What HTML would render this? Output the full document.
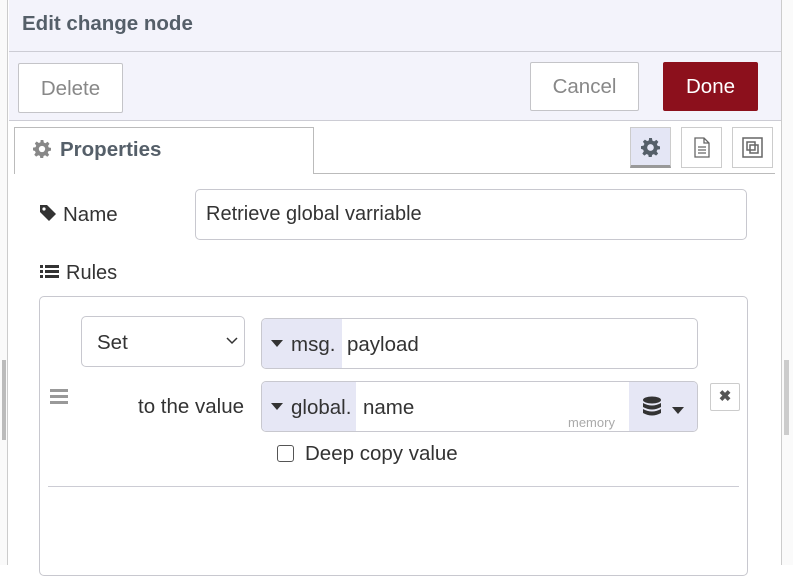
<!DOCTYPE html>
<html><head><style>
*{box-sizing:border-box;margin:0;padding:0}
body{width:793px;height:565px;overflow:hidden;background:#fff;font-family:"Liberation Sans",sans-serif;position:relative;color:#444}
.a{position:absolute}
.btn{position:absolute;border:1px solid #c4c4c8;background:#fff;color:#888;font-size:20.5px;display:flex;align-items:center;justify-content:center;border-radius:2px}
.inp{position:absolute;border:1px solid #c8c8cf;border-radius:5px;background:#fff;overflow:hidden}
.tri{display:inline-block;width:0;height:0;border-left:6px solid transparent;border-right:6px solid transparent;border-top:7px solid #333;vertical-align:middle;margin-right:8px;position:relative;top:-2px}
</style></head><body>
<div class="a" style="left:0;top:0;width:8px;height:565px;background:#fafafa;border-right:1px solid #ccc"></div>
<div class="a" style="left:2px;top:360px;width:4px;height:80px;background:#bbb"></div>
<div class="a" style="left:781px;top:0;width:12px;height:565px;background:#fafafa;border-left:1px solid #ccc"></div>
<div class="a" style="left:784px;top:360px;width:5px;height:75px;background:#ccc"></div>
<div class="a" style="left:9px;top:0;width:772px;height:120px;background:#f3f3fb"></div>
<div class="a" style="left:22px;top:12px;font-size:20.5px;font-weight:bold;color:#555f69">Edit change node</div>
<div class="a" style="left:9px;top:51px;width:772px;height:1px;background:#ccccd4"></div>
<div class="a" style="left:9px;top:120px;width:772px;height:1px;background:#ccccd4"></div>
<div class="btn" style="left:18px;top:63px;width:105px;height:50px;padding-top:2px">Delete</div>
<div class="btn" style="left:530px;top:62px;width:109px;height:49px">Cancel</div>
<div class="btn" style="left:663px;top:62px;width:95px;height:49px;background:#8c101c;color:#fff;border-color:#8c101c">Done</div>
<div class="a" style="left:14px;top:127px;width:300px;height:47px;border:1px solid #bbb;border-bottom:none;background:#fff"></div>
<div class="a" style="left:313px;top:173px;width:462px;height:1px;background:#bbb"></div>
<svg class="a" style="left:33px;top:140px" width="18" height="18" viewBox="0 0 20 20"><path fill="#888" d="M10 6.5a3.5 3.5 0 1 0 0 7 3.5 3.5 0 0 0 0-7zM8.5 0h3l.5 2.8 1.8.8 2.4-1.6 2.1 2.1-1.6 2.4.8 1.8 2.5.5v3l-2.8.5-.8 1.8 1.6 2.4-2.1 2.1-2.4-1.6-1.8.8-.5 2.7h-3l-.5-2.8-1.8-.8-2.4 1.6-2.1-2.1 1.6-2.4-.8-1.8L0 11.5v-3l2.8-.5.8-1.8L2 3.8 4.1 1.7l2.4 1.6 1.8-.8z"/></svg>
<div class="a" style="left:60px;top:138px;font-size:20.5px;font-weight:bold;color:#555f69">Properties</div>
<div class="a" style="left:630px;top:127px;width:41px;height:41px;background:#e4e6f5;border:1px solid #ccc;border-bottom:3px solid #999"></div>
<svg class="a" style="left:641px;top:138px" width="19" height="19" viewBox="0 0 20 20"><path fill="#555f69" d="M10 6.5a3.5 3.5 0 1 0 0 7 3.5 3.5 0 0 0 0-7zM8.5 0h3l.5 2.8 1.8.8 2.4-1.6 2.1 2.1-1.6 2.4.8 1.8 2.5.5v3l-2.8.5-.8 1.8 1.6 2.4-2.1 2.1-2.4-1.6-1.8.8-.5 2.7h-3l-.5-2.8-1.8-.8-2.4 1.6-2.1-2.1 1.6-2.4-.8-1.8L0 11.5v-3l2.8-.5.8-1.8L2 3.8 4.1 1.7l2.4 1.6 1.8-.8z"/></svg>
<div class="a" style="left:681px;top:127px;width:41px;height:41px;border:1px solid #ccc"><svg width="39" height="39"><path d="M13 10h9l5 5v14H13z M22 10v5h5 M16 19h8M16 22h8M16 25h8" fill="none" stroke="#666" stroke-width="1.3"/></svg></div>
<div class="a" style="left:732px;top:127px;width:41px;height:41px;border:1px solid #ccc"><svg width="39" height="39"><rect x="10" y="10" width="19" height="19" fill="none" stroke="#666" stroke-width="1.5"/><rect x="14" y="14" width="8" height="8" fill="none" stroke="#666" stroke-width="1.5"/><rect x="17" y="17" width="8" height="8" fill="none" stroke="#666" stroke-width="1.5"/></svg></div>
<svg class="a" style="left:39px;top:204px" width="18" height="18"><path d="M1 1h7l9 9-7 7-9-9z" fill="#333"/><circle cx="5" cy="5" r="1.6" fill="#fff"/></svg>
<div class="a" style="left:63px;top:203px;font-size:20.5px;color:#333">Name</div>
<div class="inp" style="left:195px;top:189px;width:552px;height:51px;padding:13px 10px;font-size:20px;color:#333">Retrieve global varriable</div>
<svg class="a" style="left:40px;top:264px" width="20" height="16"><g fill="#333"><rect x="0" y="1" width="3" height="3"/><rect x="5" y="1" width="14" height="3"/><rect x="0" y="6" width="3" height="3"/><rect x="5" y="6" width="14" height="3"/><rect x="0" y="11" width="3" height="3"/><rect x="5" y="11" width="14" height="3"/></g></svg>
<div class="a" style="left:66px;top:262px;font-size:20px;color:#333">Rules</div>
<div class="a" style="left:39px;top:296px;width:709px;height:280px;border:1px solid #c8c8cf;border-radius:5px"></div>
<div class="inp" style="left:81px;top:316px;width:164px;height:51px;padding:14px 15px;font-size:20.5px;color:#333">Set</div>
<svg class="a" style="left:226px;top:336px" width="12" height="9"><path d="M1 2l5 5 5-5" fill="none" stroke="#333" stroke-width="1.5"/></svg>
<div class="inp" style="left:261px;top:318px;width:437px;height:51px">
<div class="a" style="left:0;top:0;width:80px;height:51px;background:#e6e7f5"></div>
<div class="a" style="left:9px;top:14px;font-size:20.5px;color:#333"><span class="tri"></span>msg.</div>
<div class="a" style="left:85px;top:14px;font-size:20.5px;color:#333">payload</div></div>
<div class="a" style="left:50px;top:389px;width:18px;height:3px;background:#999;box-shadow:0 6px 0 #999,0 12px 0 #999"></div>
<div class="a" style="left:138px;top:395px;font-size:20.5px;color:#333">to the value</div>
<div class="inp" style="left:261px;top:381px;width:437px;height:51px">
<div class="a" style="left:0;top:0;width:94px;height:51px;background:#e6e7f5"></div>
<div class="a" style="left:367px;top:0;width:70px;height:51px;background:#e6e7f5"></div>
<div class="a" style="left:9px;top:14px;font-size:20.5px;color:#333"><span class="tri"></span>global.</div>
<div class="a" style="left:101px;top:14px;font-size:20.5px;color:#333">name</div>
<div class="a" style="left:306px;top:33px;font-size:13px;color:#aaa">memory</div>
<svg class="a" style="left:380px;top:14px" width="20" height="24"><g fill="#333"><ellipse cx="10" cy="4" rx="9" ry="3.5"/><path d="M1 7q9 5 18 0v4q-9 5-18 0z M1 13q9 5 18 0v4q-9 5-18 0z"/></g></svg>
<div class="a" style="left:410px;top:22px"><span class="tri"></span></div></div>
<div class="a" style="left:710px;top:383px;width:30px;height:28px;border:1px solid #ccc;border-radius:2px;text-align:center;font-size:15px;font-weight:bold;line-height:26px;color:#555">✖</div>
<div class="a" style="left:277px;top:445px;width:17px;height:17px;border:1.5px solid #555;border-radius:3px"></div>
<div class="a" style="left:305px;top:442px;font-size:20.5px;color:#333">Deep copy value</div>
<div class="a" style="left:48px;top:486px;width:691px;height:1px;background:#ccccd4"></div>
</body></html>
